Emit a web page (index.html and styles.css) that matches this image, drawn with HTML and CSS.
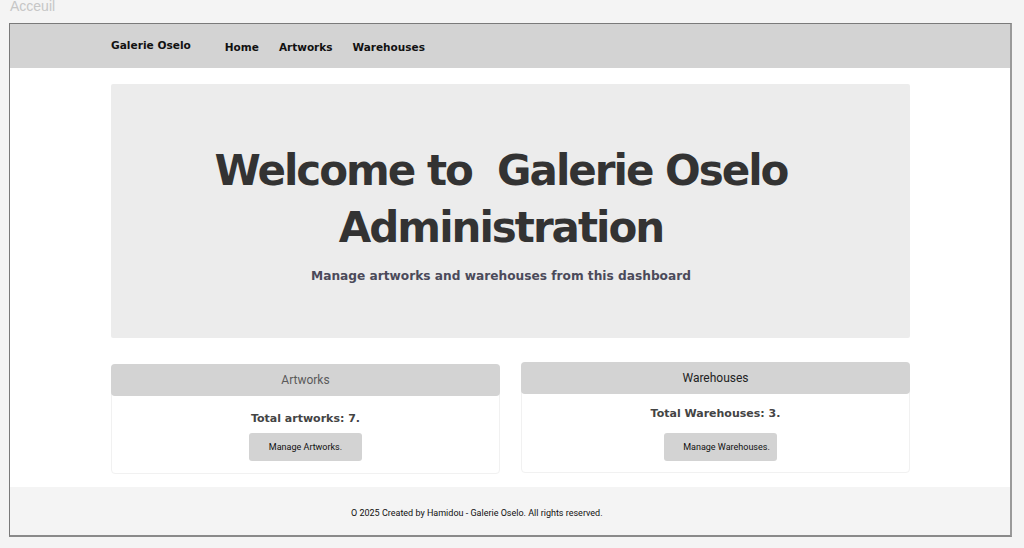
FILE: index.html
```html
<!DOCTYPE html>
<html lang="en">
<head>
<meta charset="utf-8">
<title>Acceuil</title>
<link rel="stylesheet" href="styles.css">
</head>
<body>
<div class="frame-label">Acceuil</div>
<div class="frame">
  <header class="navbar">
    <div class="container nav-inner">
      <span class="brand">Galerie Oselo</span>
      <nav class="links">
        <a href="#">Home</a>
        <a href="#">Artworks</a>
        <a href="#">Warehouses</a>
      </nav>
    </div>
  </header>
  <main class="main">
    <div class="container">
      <section class="hero">
        <h1>Welcome to &nbsp;Galerie Oselo<br>Administration</h1>
        <p>Manage artworks and warehouses from this dashboard</p>
      </section>
      <div class="cards">
        <div class="card card-left">
          <div class="card-head muted">Artworks</div>
          <div class="card-body body-left">
            <div class="total">Total artworks: 7.</div>
            <button class="btn">Manage Artworks.</button>
          </div>
        </div>
        <div class="card card-right">
          <div class="card-head">Warehouses</div>
          <div class="card-body body-right">
            <div class="total">Total Warehouses: 3.</div>
            <button class="btn btn-wide">Manage Warehouses.</button>
          </div>
        </div>
      </div>
    </div>
  </main>
  <footer class="footer">
    <div class="container footer-inner">O 2025 Created by Hamidou - Galerie Oselo. All rights reserved.</div>
  </footer>
</div>
</body>
</html>
```
FILE: styles.css
```css
* { box-sizing: border-box; }
html, body { margin: 0; padding: 0; }
body {
  background: #f4f4f4;
  font-family: "DejaVu Sans", sans-serif;
  width: 1024px;
  height: 548px;
  overflow: hidden;
}
.frame-label {
  font-family: "Liberation Sans", Arial, sans-serif;
  font-size: 14px;
  color: #c6c6c6;
  line-height: 14px;
  margin: -1px 0 0 10px;
  height: 24px;
}
.frame {
  margin-left: 9px;
  width: 1003px;
  height: 514px;
  border: 1px solid #7a7a7a;
  border-right: 2px solid #9a9a9a;
  border-bottom: 2px solid #8a8a8a;
  background: #fff;
  display: flex;
  flex-direction: column;
}
.container {
  width: 799px;
  margin-left: 101px;
}
.navbar {
  background: #d3d3d3;
  height: 44px;
  flex: none;
}
.nav-inner {
  display: flex;
  align-items: center;
  height: 100%;
}
.brand {
  font-weight: bold;
  font-size: 10.6px;
  color: #111;
  margin-top: -2px;
}
.links {
  display: flex;
  gap: 20px;
  margin-left: 34px;
  margin-top: 2px;
}
.links a {
  font-weight: bold;
  font-size: 10.5px;
  color: #111;
  text-decoration: none;
}
.main {
  flex: 1;
  background: #fff;
  padding-top: 16px;
}
.hero {
  background: #ececec;
  height: 254px;
  text-align: center;
  padding: 58px 19px 0 0;
  border-radius: 2px;
}
.hero h1 {
  margin: 0;
  font-size: 42px;
  line-height: 57px;
  letter-spacing: -2px;
  color: #333;
  font-weight: bold;
}
.hero p {
  margin: 13px 0 0;
  font-size: 12.2px;
  font-weight: bold;
  color: #4b4a5a;
}
.cards {
  display: flex;
  gap: 21px;
  margin-top: 26px;
  align-items: flex-start;
}
.card {
  flex: 1;
  border: 1px solid #f1f1f1;
  border-radius: 4px;
}
.card-left { height: 110px; }
.card-right { margin-top: -2px; height: 111px; }
.card-head {
  background: #d3d3d3;
  height: 32px;
  line-height: 32px;
  text-align: center;
  border-radius: 4px;
  font-family: Roboto, sans-serif;
  font-size: 12px;
  color: #222;
  margin: -1px -1px 0;
}
.card-head.muted { color: #5a5a5a; }
.card-body {
  display: flex;
  flex-direction: column;
  align-items: center;
}
.body-left { padding-top: 15px; }
.body-left .btn { margin-top: 6px; }
.body-right { padding-top: 12px; }
.body-right .btn { margin-top: 11px; }
.total {
  font-weight: bold;
  font-size: 11px;
  color: #444;
  line-height: 16px;
}
.btn {
  width: 113px;
  height: 28px;
  border: none;
  border-radius: 3px;
  background: #d3d3d3;
  font-family: Roboto, sans-serif;
  font-size: 9px;
  color: #111;
}
.btn-wide { padding-left: 18px; margin-left: 10px; }
.footer {
  background: #f4f4f4;
  height: 48px;
  flex: none;
}
.footer-inner {
  padding-left: 240px;
  font-family: Roboto, sans-serif;
  font-size: 9px;
  color: #111;
  line-height: 53px;
}
```
